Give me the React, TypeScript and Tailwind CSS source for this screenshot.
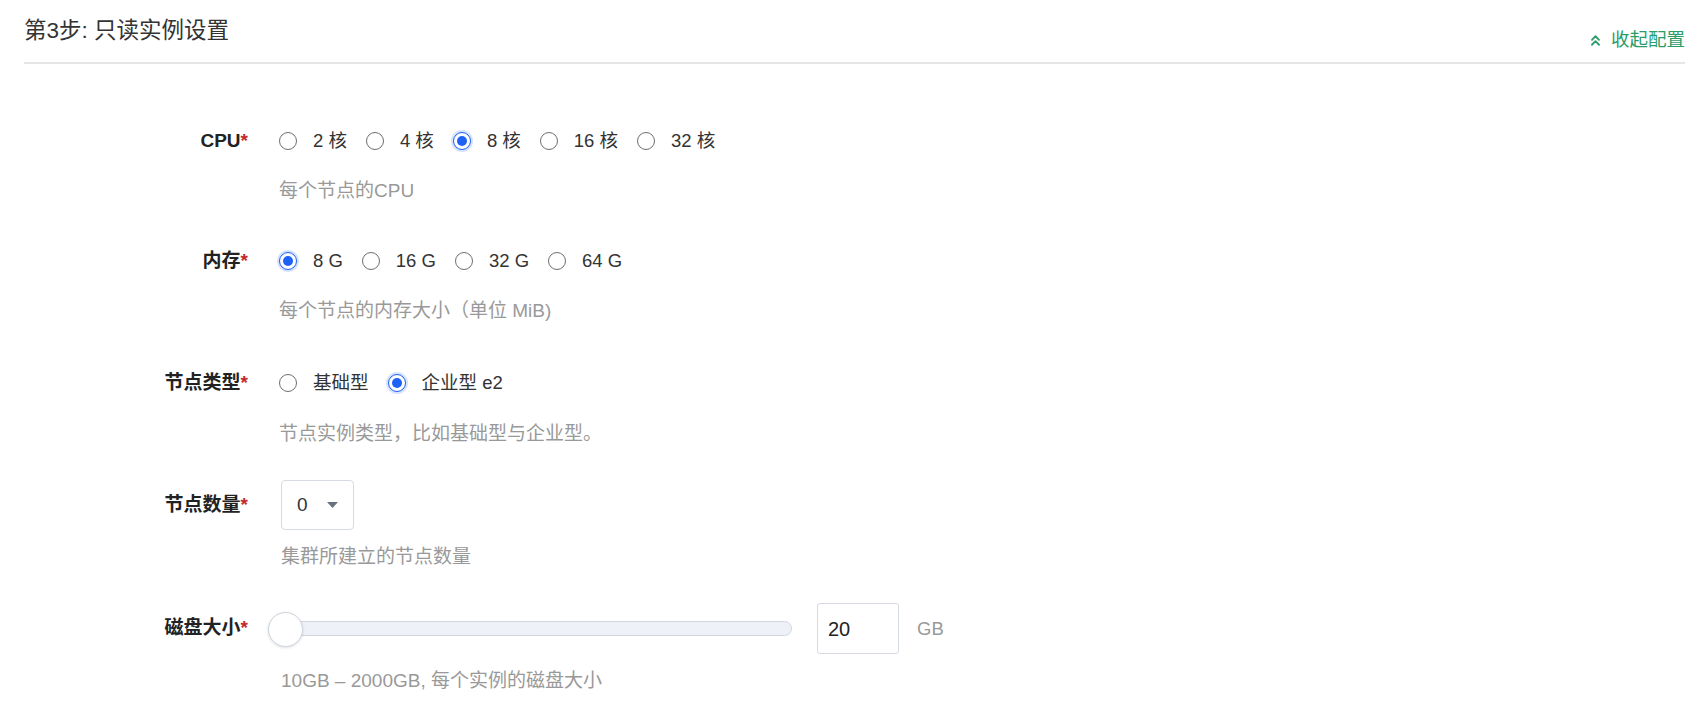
import { ChevronsUp } from 'lucide-react';

const font = { fontFamily: '"Liberation Sans", "Noto Sans CJK SC", sans-serif' };

function Radio({ checked, label }: { checked?: boolean; label: string }) {
  return (
    <label className="flex items-center mr-[19px] cursor-pointer">
      {checked ? (
        <span className="w-[18px] h-[18px] rounded-full border-[1.5px] border-[#1d5ff5] bg-white flex items-center justify-center shadow-[0_0_0_2px_#d6e3ff]">
          <span className="w-[10px] h-[10px] rounded-full bg-[#1d62f5]" />
        </span>
      ) : (
        <span className="w-[18px] h-[18px] rounded-full border-[1.5px] border-[#6e6e6e] bg-white" />
      )}
      <span className="ml-[16px] text-[18.5px] text-[#333]">{label}</span>
    </label>
  );
}

function Label({ text, h }: { text: string; h: string }) {
  return (
    <div className={`w-[224px] shrink-0 flex items-center justify-end text-[19px] font-bold text-[#222] ${h}`}>
      {text}
      <span className="text-[#c3282d]">*</span>
    </div>
  );
}

function Help({ children, mt }: { children: React.ReactNode; mt: string }) {
  return <div className={`${mt} text-[19px] leading-[24px] text-[#999]`}>{children}</div>;
}

export default function App() {
  return (
    <div className="min-h-screen bg-white" style={font}>
      <div className="ml-[24px] mr-[15px] h-[64px] border-b-2 border-[#e6e6e6] flex justify-between">
        <div className="mt-[17px] text-[22.5px] leading-[28px] text-[#333]">第3步: 只读实例设置</div>
        <div className="mt-[28px] h-[24px] flex items-center text-[18.5px] text-[#2a9d69]">
          <ChevronsUp className="w-[17px] h-[17px] mr-[7px]" strokeWidth={2.5} />
          收起配置
        </div>
      </div>

      <div className="pl-[24px]">
        {/* CPU */}
        <div className="flex mt-[63px]">
          <Label text="CPU" h="h-[28px]" />
          <div className="ml-[31px]">
            <div className="flex items-center h-[28px]">
              <Radio label="2 核" />
              <Radio label="4 核" />
              <Radio label="8 核" checked />
              <Radio label="16 核" />
              <Radio label="32 核" />
            </div>
            <Help mt="mt-[24px]">每个节点的CPU</Help>
          </div>
        </div>

        {/* 内存 */}
        <div className="flex mt-[44px]">
          <Label text="内存" h="h-[28px]" />
          <div className="ml-[31px]">
            <div className="flex items-center h-[28px]">
              <Radio label="8 G" checked />
              <Radio label="16 G" />
              <Radio label="32 G" />
              <Radio label="64 G" />
            </div>
            <Help mt="mt-[24px]">每个节点的内存大小（单位 MiB)</Help>
          </div>
        </div>

        {/* 节点类型 */}
        <div className="flex mt-[46px]">
          <Label text="节点类型" h="h-[28px]" />
          <div className="ml-[31px]">
            <div className="flex items-center h-[28px]">
              <Radio label="基础型" />
              <Radio label="企业型 e2" checked />
            </div>
            <Help mt="mt-[25px]">节点实例类型，比如基础型与企业型。</Help>
          </div>
        </div>

        {/* 节点数量 */}
        <div className="flex mt-[34px]">
          <Label text="节点数量" h="h-[50px]" />
          <div className="ml-[33px]">
            <div className="w-[73px] h-[50px] border border-[#d5dae3] rounded-[4px] flex items-center pl-[15px]">
              <span className="text-[19px] text-[#333]">0</span>
              <svg className="ml-[19px]" width="11" height="6" viewBox="0 0 11 6">
                <path d="M0 0 L11 0 L5.5 6 Z" fill="#6b7080" />
              </svg>
            </div>
            <Help mt="mt-[15px]">集群所建立的节点数量</Help>
          </div>
        </div>

        {/* 磁盘大小 */}
        <div className="flex mt-[34px]">
          <Label text="磁盘大小" h="h-[51px]" />
          <div className="ml-[33px]">
            <div className="flex items-center h-[51px]">
              <div className="relative -ml-[13px] w-[524px] h-[36px] flex items-center">
                <div className="w-full h-[15px] rounded-full border border-[#cfd6e1] bg-[#eef2f8]" />
                <div className="absolute left-0 top-[1px] w-[35px] h-[35px] rounded-full bg-white border-[1.5px] border-[#cdd4dc] shadow-[0_1px_3px_rgba(0,0,0,0.12)]" />
              </div>
              <div className="ml-[25px] w-[82px] h-[51px] border border-[#d5dae3] rounded-[3px] flex items-center pl-[10px] text-[20px] text-[#222]">
                20
              </div>
              <span className="ml-[18px] text-[18.5px] text-[#999]">GB</span>
            </div>
            <Help mt="mt-[15px]">10GB – 2000GB, 每个实例的磁盘大小</Help>
          </div>
        </div>
      </div>
    </div>
  );
}
